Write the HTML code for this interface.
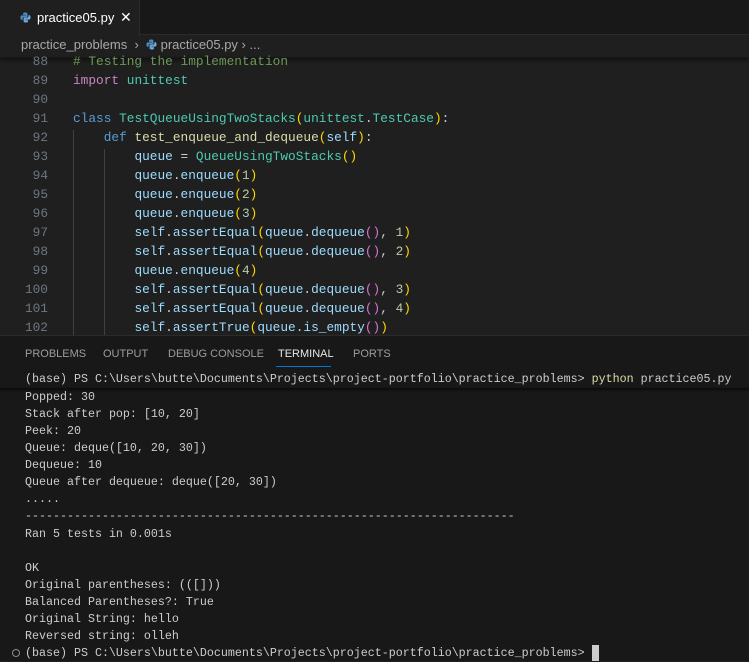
<!DOCTYPE html>
<html><head><meta charset="utf-8"><style>
*{margin:0;padding:0;box-sizing:border-box}
body{width:749px;height:661px;background:#1f1f1f;overflow:hidden;position:relative;font-family:"Liberation Sans",sans-serif}
.tabbar{position:absolute;left:0;top:0;width:749px;height:35px;background:#181818;border-bottom:1px solid #2b2b2b}
.tab{position:absolute;left:0;top:0;width:140px;height:36px;background:#1f1f1f;border-right:1px solid #2b2b2b;color:#fff;font-size:13px}
.tab span{position:absolute;top:10px}
.bc{position:absolute;left:21px;top:37px;color:#a9a9a9;font-size:13px;height:22px;line-height:16px}
.py{display:inline-block;width:11px;height:11px;vertical-align:-1px}
.code{position:absolute;left:0;top:54px;font-family:"Liberation Mono",monospace;font-size:12.8px}
.ln{position:absolute;left:0;width:48px;text-align:right;color:#6e7681}
.cl{position:absolute;left:73px;white-space:pre;color:#cccccc}
.guide{position:absolute;width:1px;background:#404040}
.k{color:#569cd6}.i{color:#c586c0}.c{color:#6a9955}.t{color:#4ec9b0}.v{color:#9cdcfe}.y{color:#ffd700}.p{color:#da70d6}.n{color:#b5cea8}.f{color:#dcdcaa}
.panel{position:absolute;left:0;top:335px;width:749px;height:326px;background:#181818;border-top:1px solid #2b2b2b}
.ptabs{position:absolute;top:12px;font-size:11px;color:#9d9d9d}
.ptabs span{position:absolute;white-space:nowrap}
.term{position:absolute;left:25px;font-family:"Liberation Mono",monospace;font-size:11.67px;color:#cccccc;white-space:pre}
</style></head><body>
<div class="tabbar"></div>
<div class="tab"><svg class="py" style="position:absolute;left:20px;top:12px" viewBox="0 0 12 12"><path d="M6 0.5C3 0.5 3.3 1.8 3.3 1.8V3.2h2.8v0.5H2.1S0.5 3.5 0.5 6.1s1.4 2.5 1.4 2.5h0.9V7.3s0-1.4 1.4-1.4h2.6s1.3 0 1.3-1.3V2S8.3 0.5 6 0.5z" fill="#4b8bbe"/><path d="M6 11.5c3 0 2.7-1.3 2.7-1.3V8.8H5.9V8.3h4S11.5 8.5 11.5 5.9 10.1 3.4 10.1 3.4H9.2v1.3s0 1.4-1.4 1.4H5.2s-1.3 0-1.3 1.3V10S3.7 11.5 6 11.5z" fill="#6fa8dc"/></svg><span style="left:37px">practice05.py</span><span style="left:120px;font-size:14px;top:9px">✕</span></div>
<div class="bc">practice_problems &nbsp;›&nbsp; <svg class="py" viewBox="0 0 12 12"><path d="M6 0.5C3 0.5 3.3 1.8 3.3 1.8V3.2h2.8v0.5H2.1S0.5 3.5 0.5 6.1s1.4 2.5 1.4 2.5h0.9V7.3s0-1.4 1.4-1.4h2.6s1.3 0 1.3-1.3V2S8.3 0.5 6 0.5z" fill="#4b8bbe"/><path d="M6 11.5c3 0 2.7-1.3 2.7-1.3V8.8H5.9V8.3h4S11.5 8.5 11.5 5.9 10.1 3.4 10.1 3.4H9.2v1.3s0 1.4-1.4 1.4H5.2s-1.3 0-1.3 1.3V10S3.7 11.5 6 11.5z" fill="#6fa8dc"/></svg> practice05.py › ...</div>
<div style="position:absolute;left:0;top:58px;width:749px;height:1px;background:#111;box-shadow:0 1px 3px #000"></div>
<div class="code">
<div class="guide" style="left:73px;top:76px;height:207px"></div>
<div class="guide" style="left:104px;top:95px;height:188px"></div>
<div class="ln" style="top:0">88</div><div class="cl" style="top:0"><span class="c"># Testing the implementation</span></div>
<div class="ln" style="top:19px">89</div><div class="cl" style="top:19px"><span class="i">import</span> <span class="t">unittest</span></div>
<div class="ln" style="top:38px">90</div>
<div class="ln" style="top:57px">91</div><div class="cl" style="top:57px"><span class="k">class</span> <span class="t">TestQueueUsingTwoStacks</span><span class="y">(</span><span class="t">unittest</span>.<span class="t">TestCase</span><span class="y">)</span>:</div>
<div class="ln" style="top:76px">92</div><div class="cl" style="top:76px">    <span class="k">def</span> <span class="f">test_enqueue_and_dequeue</span><span class="y">(</span><span class="v">self</span><span class="y">)</span>:</div>
<div class="ln" style="top:95px">93</div><div class="cl" style="top:95px">        <span class="v">queue</span> = <span class="t">QueueUsingTwoStacks</span><span class="y">()</span></div>
<div class="ln" style="top:114px">94</div><div class="cl" style="top:114px">        <span class="v">queue</span>.<span class="v">enqueue</span><span class="y">(</span><span class="n">1</span><span class="y">)</span></div>
<div class="ln" style="top:133px">95</div><div class="cl" style="top:133px">        <span class="v">queue</span>.<span class="v">enqueue</span><span class="y">(</span><span class="n">2</span><span class="y">)</span></div>
<div class="ln" style="top:152px">96</div><div class="cl" style="top:152px">        <span class="v">queue</span>.<span class="v">enqueue</span><span class="y">(</span><span class="n">3</span><span class="y">)</span></div>
<div class="ln" style="top:171px">97</div><div class="cl" style="top:171px">        <span class="v">self</span>.<span class="v">assertEqual</span><span class="y">(</span><span class="v">queue</span>.<span class="v">dequeue</span><span class="p">()</span>, <span class="n">1</span><span class="y">)</span></div>
<div class="ln" style="top:190px">98</div><div class="cl" style="top:190px">        <span class="v">self</span>.<span class="v">assertEqual</span><span class="y">(</span><span class="v">queue</span>.<span class="v">dequeue</span><span class="p">()</span>, <span class="n">2</span><span class="y">)</span></div>
<div class="ln" style="top:209px">99</div><div class="cl" style="top:209px">        <span class="v">queue</span>.<span class="v">enqueue</span><span class="y">(</span><span class="n">4</span><span class="y">)</span></div>
<div class="ln" style="top:228px">100</div><div class="cl" style="top:228px">        <span class="v">self</span>.<span class="v">assertEqual</span><span class="y">(</span><span class="v">queue</span>.<span class="v">dequeue</span><span class="p">()</span>, <span class="n">3</span><span class="y">)</span></div>
<div class="ln" style="top:247px">101</div><div class="cl" style="top:247px">        <span class="v">self</span>.<span class="v">assertEqual</span><span class="y">(</span><span class="v">queue</span>.<span class="v">dequeue</span><span class="p">()</span>, <span class="n">4</span><span class="y">)</span></div>
<div class="ln" style="top:266px">102</div><div class="cl" style="top:266px">        <span class="v">self</span>.<span class="v">assertTrue</span><span class="y">(</span><span class="v">queue</span>.<span class="v">is_empty</span><span class="p">()</span><span class="y">)</span></div>
</div>
<div class="panel">
<div class="ptabs"><span style="left:25px">PROBLEMS</span><span style="left:103px">OUTPUT</span><span style="left:168px">DEBUG CONSOLE</span><span style="left:278px;color:#e7e7e7">TERMINAL</span><span style="left:353px">PORTS</span></div>
<div style="position:absolute;left:276px;top:30px;width:55px;height:1px;background:#0078d4"></div>
<div class="term" style="top:36px">(base) PS C:\Users\butte\Documents\Projects\project-portfolio\practice_problems&gt; <span class="f">python</span> practice05.py</div>
<div style="position:absolute;left:0;top:52px;width:749px;height:1px;background:#0c0c0c;box-shadow:0 1px 2px #000"></div>
<div class="term" style="top:53px;line-height:17.06px">Popped: 30
Stack after pop: [10, 20]
Peek: 20
Queue: deque([10, 20, 30])
Dequeue: 10
Queue after dequeue: deque([20, 30])
.....
----------------------------------------------------------------------
Ran 5 tests in 0.001s

OK
Original parentheses: (([]))
Balanced Parentheses?: True
Original String: hello
Reversed string: olleh
(base) PS C:\Users\butte\Documents\Projects\project-portfolio\practice_problems&gt; </div>
<div style="position:absolute;left:592px;top:309px;width:7px;height:16px;background:#cccccc"></div>
<div style="position:absolute;left:12px;top:313px;width:8px;height:8px;border:1px solid #8a8a8a;border-radius:50%"></div>
</div>
</body></html>
